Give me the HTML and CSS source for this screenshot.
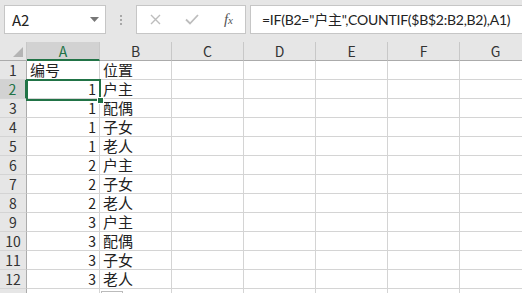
FILE: index.html
```html
<!DOCTYPE html>
<html lang="zh-CN">
<head>
  <meta charset="UTF-8">
  <title>Excel</title>
  <link rel="stylesheet" href="styles.css">
</head>
<body>
  <div class="formula-bar">
    <div class="name-box">
      <span>A2</span>
      <svg class="caret" width="9" height="5" viewBox="0 0 9 5"><path d="M0 0h9L4.5 5z" fill="#777"/></svg>
    </div>
    <div class="grip"><i></i><i></i><i></i></div>
    <div class="fx-buttons">
      <svg width="11" height="11" viewBox="0 0 11 11"><path d="M1 1l9 9M10 1l-9 9" stroke="#bdbdbd" stroke-width="1.4"/></svg>
      <svg width="14" height="11" viewBox="0 0 14 11"><path d="M1 5.5l4 4L13 1" stroke="#bdbdbd" stroke-width="1.8" fill="none"/></svg>
      <span class="fx">f<sub>x</sub></span>
    </div>
    <div class="formula">=IF(B2="户主",COUNTIF($B$2:B2,B2),A1)</div>
  </div>

  <div class="sheet">
    <div class="row head">
      <div class="rh corner"><span class="tri"></span></div>
      <div class="cell col-a sel-col">A</div>
      <div class="cell">B</div>
      <div class="cell">C</div>
      <div class="cell">D</div>
      <div class="cell">E</div>
      <div class="cell">F</div>
      <div class="cell">G</div>
    </div>
    <div class="row"><div class="rh">1</div><div class="cell col-a txt">编号</div><div class="cell txt">位置</div><div class="cell"></div><div class="cell"></div><div class="cell"></div><div class="cell"></div><div class="cell"></div></div>
    <div class="row"><div class="rh sel-row">2</div><div class="cell col-a num">1</div><div class="cell txt">户主</div><div class="cell"></div><div class="cell"></div><div class="cell"></div><div class="cell"></div><div class="cell"></div></div>
    <div class="row"><div class="rh">3</div><div class="cell col-a num">1</div><div class="cell txt">配偶</div><div class="cell"></div><div class="cell"></div><div class="cell"></div><div class="cell"></div><div class="cell"></div></div>
    <div class="row"><div class="rh">4</div><div class="cell col-a num">1</div><div class="cell txt">子女</div><div class="cell"></div><div class="cell"></div><div class="cell"></div><div class="cell"></div><div class="cell"></div></div>
    <div class="row"><div class="rh">5</div><div class="cell col-a num">1</div><div class="cell txt">老人</div><div class="cell"></div><div class="cell"></div><div class="cell"></div><div class="cell"></div><div class="cell"></div></div>
    <div class="row"><div class="rh">6</div><div class="cell col-a num">2</div><div class="cell txt">户主</div><div class="cell"></div><div class="cell"></div><div class="cell"></div><div class="cell"></div><div class="cell"></div></div>
    <div class="row"><div class="rh">7</div><div class="cell col-a num">2</div><div class="cell txt">子女</div><div class="cell"></div><div class="cell"></div><div class="cell"></div><div class="cell"></div><div class="cell"></div></div>
    <div class="row"><div class="rh">8</div><div class="cell col-a num">2</div><div class="cell txt">老人</div><div class="cell"></div><div class="cell"></div><div class="cell"></div><div class="cell"></div><div class="cell"></div></div>
    <div class="row"><div class="rh">9</div><div class="cell col-a num">3</div><div class="cell txt">户主</div><div class="cell"></div><div class="cell"></div><div class="cell"></div><div class="cell"></div><div class="cell"></div></div>
    <div class="row"><div class="rh">10</div><div class="cell col-a num">3</div><div class="cell txt">配偶</div><div class="cell"></div><div class="cell"></div><div class="cell"></div><div class="cell"></div><div class="cell"></div></div>
    <div class="row"><div class="rh">11</div><div class="cell col-a num">3</div><div class="cell txt">子女</div><div class="cell"></div><div class="cell"></div><div class="cell"></div><div class="cell"></div><div class="cell"></div></div>
    <div class="row"><div class="rh">12</div><div class="cell col-a num">3</div><div class="cell txt">老人</div><div class="cell"></div><div class="cell"></div><div class="cell"></div><div class="cell"></div><div class="cell"></div></div>
    <div class="row"><div class="rh"></div><div class="cell col-a"></div><div class="cell"><span class="fill-opt"></span></div><div class="cell"></div><div class="cell"></div><div class="cell"></div><div class="cell"></div><div class="cell"></div></div>

    <!-- selected cell A2 -->
    <div class="selection"><span class="handle"></span></div>
  </div>
</body>
</html>
```

FILE: styles.css
```css
body {
  margin: 0;
  width: 522px;
  height: 293px;
  overflow: hidden;
  background: #fff;
  font-family: "Noto Sans CJK SC", "DejaVu Sans", sans-serif;
  font-size: 14px;
  color: #222;
}
.formula-bar {
  display: flex;
  align-items: flex-start;
  height: 42px;
  padding-top: 5px;
  box-sizing: border-box;
  background: #e6e6e6;
}
.name-box {
  display: flex;
  flex: none;
  align-items: center;
  justify-content: space-between;
  box-sizing: border-box;
  width: 102px;
  height: 29px;
  margin-left: 4px;
  padding: 0 6px 0 7px;
  background: #fff;
  border: 1px solid #c6c6c6;
  font-size: 15px;
}
.grip {
  flex: none;
  width: 30px;
  height: 29px;
  display: flex;
  flex-direction: column;
  align-items: center;
  justify-content: center;
  gap: 2px;
}
.grip i {
  width: 2px;
  height: 2px;
  background: #a8a8a8;
}
.fx-buttons {
  display: flex;
  flex: none;
  align-items: center;
  box-sizing: border-box;
  width: 110px;
  height: 29px;
  padding: 0 12px 0 13px;
  justify-content: space-between;
  background: #fff;
  border: 1px solid #c6c6c6;
}
.fx {
  font-family: "Liberation Serif", serif;
  font-style: italic;
  font-size: 15px;
  color: #555;
}
.fx sub {
  font-size: 11px;
  vertical-align: 0;
}
.formula {
  flex: 1;
  min-width: 0;
  overflow: hidden;
  box-sizing: border-box;
  height: 29px;
  margin-left: 4px;
  padding-left: 11px;
  line-height: 27px;
  background: #fff;
  border: 1px solid #c6c6c6;
  border-right: none;
  font-family: Lato, "Noto Sans CJK SC", sans-serif;
  font-size: 14px;
  letter-spacing: -0.25px;
  white-space: nowrap;
}

.sheet {
  position: relative;
}
.row {
  display: flex;
  height: 19px;
}
.rh, .cell {
  box-sizing: border-box;
  height: 19px;
  line-height: 18px;
  flex: none;
}
.rh {
  width: 27px;
  text-align: center;
  background: #e6e6e6;
  border-right: 1px solid #ababab;
  border-bottom: 1px solid #d4d4d4;
  color: #333;
}
.cell {
  width: 72px;
  border-right: 1px solid #d4d4d4;
  border-bottom: 1px solid #d4d4d4;
}
.cell.col-a {
  width: 73px;
}
.head .cell, .head .rh {
  background: #e6e6e6;
  border-right: 1px solid #c8c8c8;
  border-bottom: 1px solid #ababab;
  text-align: center;
  color: #333;
}
.head .sel-col {
  background: #d2d2d2;
  border-bottom: 2px solid #217346;
  color: #217346;
}
.corner {
  position: relative;
}
.tri {
  position: absolute;
  right: 3px;
  bottom: 3px;
  width: 0;
  height: 0;
  border-left: 10px solid transparent;
  border-bottom: 10px solid #b4b4b4;
}
.rh.sel-row {
  background: #d2d2d2;
  border-right: 2px solid #217346;
  color: #217346;
}
.num {
  text-align: right;
  padding-right: 3px;
}
.txt {
  padding-left: 3px;
  font-size: 15px;
}
.fill-opt {
  display: block;
  width: 20px;
  height: 8px;
  margin: 2px 0 0 1px;
  border: 1px solid #bbb;
}
.selection {
  position: absolute;
  left: 26px;
  top: 37px;
  width: 75px;
  height: 22px;
  box-sizing: border-box;
  border: 2px solid #217346;
}
.handle {
  position: absolute;
  right: -5px;
  bottom: -5px;
  width: 5px;
  height: 5px;
  background: #217346;
  border: 1px solid #fff;
}
```
